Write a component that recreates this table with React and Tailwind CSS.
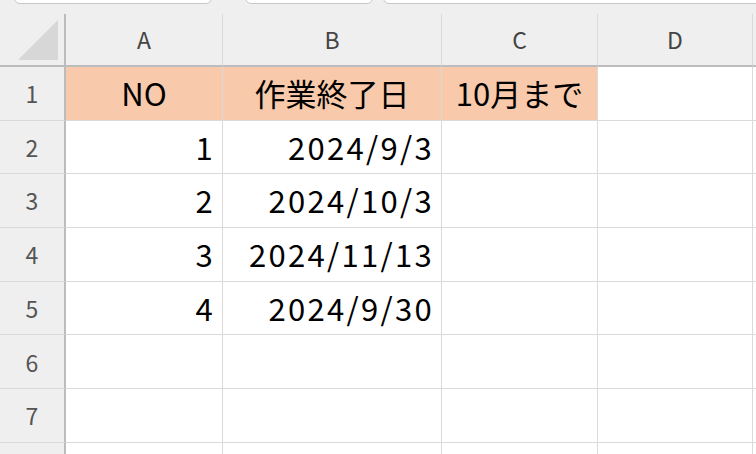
import React from "react";

const cols = [
  { key: "A", w: "w-[157px]" },
  { key: "B", w: "w-[219px]" },
  { key: "C", w: "w-[156px]" },
  { key: "D", w: "w-[155px]" },
];

const rows = [
  { n: 1, cells: ["NO", "作業終了日", "10月まで", ""], head: true },
  { n: 2, cells: ["1", "2024/9/3", "", ""] },
  { n: 3, cells: ["2", "2024/10/3", "", ""] },
  { n: 4, cells: ["3", "2024/11/13", "", ""] },
  { n: 5, cells: ["4", "2024/9/30", "", ""] },
  { n: 6, cells: ["", "", "", ""] },
  { n: 7, cells: ["", "", "", ""] },
  { n: "", cells: ["", "", "", ""] },
];

const font = { fontFamily: '"Noto Sans CJK JP", "Noto Sans", sans-serif' };

const Cell = ({ text, w, head, idx }) => {
  const fill = head && idx < 3 ? "bg-[#f8c9aa]" : "bg-white";
  const align = head ? "justify-center" : "justify-end pr-[7px] tracking-[2.3px]";
  return (
    <div
      className={`${w} ${fill} ${align} shrink-0 flex items-center border-r border-b border-[#dadada] text-[31px] text-black`}
    >
      {text}
    </div>
  );
};

export default function App() {
  return (
    <div className="w-[756px] h-[454px] overflow-hidden bg-[#efefef]" style={font}>
      {/* toolbar edge */}
      <div className="h-[14px] relative">
        <div className="absolute left-[14px] top-[-10px] w-[198px] h-[14px] bg-white border border-[#c8c8c8] rounded-md" />
        <div className="absolute left-[245px] top-[-10px] w-[128px] h-[14px] bg-white border border-[#c8c8c8] rounded-md" />
        <div className="absolute left-[383px] top-[-10px] w-[400px] h-[14px] bg-white border border-[#c8c8c8] rounded-md" />
      </div>

      {/* column header */}
      <div className="flex h-[53px]">
        <div className="w-[66px] shrink-0 flex items-end justify-end pr-[6px] pb-[5px] border-r-2 border-b-2 border-[#bcbcbc]">
          <svg width="40" height="40" viewBox="0 0 40 40">
            <polygon points="40,0 40,40 0,40" fill="#d7d7d7" />
          </svg>
        </div>
        {cols.map((c) => (
          <div
            key={c.key}
            className={`${c.w} shrink-0 flex items-center justify-center border-r border-[#d9d9d9] border-b-2 border-b-[#bcbcbc] text-[23px] text-[#444]`}
          >
            {c.key}
          </div>
        ))}
        <div className="flex-1 border-b-2 border-[#bcbcbc]" />
      </div>

      {rows.map((r, k) => (
        <div key={k} className="flex h-[53.7px]">
          <div className="w-[66px] shrink-0 flex items-center justify-center border-r-2 border-r-[#bcbcbc] border-b border-b-[#dadada] text-[23px] text-[#555]">
            {r.n}
          </div>
          {r.cells.map((t, i) => (
            <Cell key={i} text={t} w={cols[i].w} head={r.head} idx={i} />
          ))}
          <div className="flex-1 bg-white border-b border-[#dadada]" />
        </div>
      ))}
    </div>
  );
}
